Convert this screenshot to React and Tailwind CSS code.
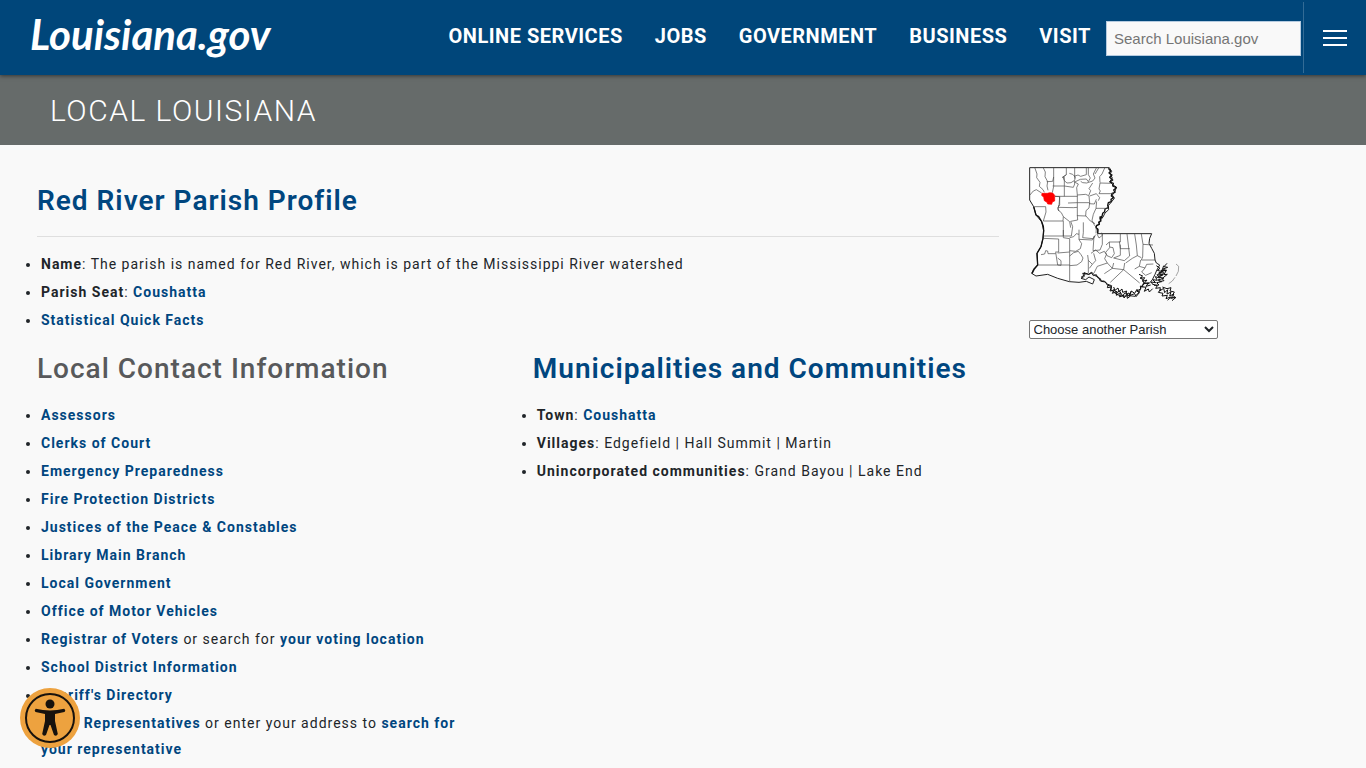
import { useState } from "react";

const navLinks = ["Online Services", "Jobs", "Government", "Business", "Visit"];

const contactsBefore = [
  "Assessors",
  "Clerks of Court",
  "Emergency Preparedness",
  "Fire Protection Districts",
  "Justices of the Peace & Constables",
  "Library Main Branch",
  "Local Government",
  "Office of Motor Vehicles",
];

const parishes = ["Acadia", "Bossier", "Caddo", "De Soto", "Natchitoches", "Sabine"];

const TextLink = ({ children }) => (
  <a href="#" className="font-bold text-[#00467f] hover:underline">
    {children}
  </a>
);

const List = ({ children }) => (
  <ul className="flex list-outside list-disc flex-col gap-[2px] pr-8 pl-1 text-sm leading-[26px] tracking-[1px]">
    {children}
  </ul>
);

const Header = () => (
  <header className="relative flex h-[75px] items-center bg-[#00467a] shadow-[0_1px_4px_rgba(0,0,0,0.5)]">
    <a
      href="#"
      className="ml-[30px] pb-2 font-['Lato','Liberation_Sans',sans-serif] text-[42px] leading-[50px] font-bold text-white italic"
    >
      Louisiana.gov
    </a>
    <nav className="ml-auto flex gap-8 pb-[3px]">
      {navLinks.map((link) => (
        <a
          key={link}
          href="#"
          className="text-xl leading-6 font-bold tracking-wide whitespace-nowrap text-white uppercase"
        >
          {link}
        </a>
      ))}
    </nav>
    <form className="ml-[15px]" onSubmit={(e) => e.preventDefault()}>
      <input
        type="search"
        aria-label="Search Louisiana.gov"
        placeholder="Search Louisiana.gov"
        className="mt-[2px] block h-[35px] w-[195px] border border-[#b5cbe0] bg-[#f9f9f9] px-[7px] font-['Liberation_Sans',sans-serif] text-[15px] text-gray-800 placeholder:text-[#757575]"
      />
    </form>
    <button
      type="button"
      aria-label="Menu"
      className="ml-[2px] flex h-[71px] w-[63px] flex-col items-center justify-center gap-[5px] border-l border-[#336b95]"
    >
      <span className="h-[2px] w-6 bg-white" />
      <span className="h-[2px] w-6 bg-white" />
      <span className="h-[2px] w-6 bg-white" />
    </button>
  </header>
);

const ParishMap = () => (
  <svg
    className="block h-[137px] w-[152px]"
    viewBox="0 0 456 411"
    role="img"
    aria-label="Map of Louisiana with Red River Parish in red"
    fill="none"
    stroke="#444"
    strokeWidth="2"
    strokeLinejoin="round"
  >
    {/* state outline */}
    <path
      fill="#fff"
      stroke="#222"
      strokeWidth="3"
      d="M2 2H241L248 13 243 21 250 33 242 44 252 54 262 60 258 74 250 84 256 94 248 104 238 116 239 128 228 138 222 150 214 160 210 172 201 178 206 190 206 200H368L362 214 360 229 368 244 376 259 378 279 382 288 392 294 384 308 378 322 370 338 360 350 344 348 336 362 330 376 318 388 300 386 280 388 262 382 246 368 248 356 236 352 226 342 214 342 208 330 198 326 190 317 180 322 161 319 166 328 156 334 170 338 180 330 196 338 191 351 172 343 150 346 121 344 86 334 56 322 21 327 8 319 14 306 26 294 24 259 36 239 42 214 44 191 38 164 21 144 14 119 2 99Z"
    />
    {/* river bank and west border */}
    <path
      stroke="#111"
      strokeWidth="4"
      d="M238 4l7 8-5 6 9 6-7 7 9 8-8 6 10 4-2 8 11 5-8 7 4 7-9 3-2 8 7 5-8 5 1 7-9 3-2 8 2 7-10 4-1 8-6 5-2 9-8 3M220 150l-7 5 3 7-7 3 2 7-8 3-2 7 6 5-1 12M14 119l7 25 8 5 9 15 5 14 1 13-2 23-6 25-12 20 2 35-10 12-7 14"
    />
    {/* northern parishes */}
    <path d="M17 1l7 20-1 11 10 14-2 12 11 10 4 8M42 1l7 14-1 14 8 15-2 13 3 13M74 1v29l-3 13-18 1M74 30v28l-4 19M112 1v22l-12 8M71 57h35V31h-6M106 57l27 4 4-10-1-10M112 23l-10 8 4 10 8 7 12-1 11-7 2-10-8-8-10-3M137 1v34M172 1v22l-17 5-8-4-12 4M1 86l12-14 9-4 16 10M137 45l17-8 18-1 6 8 6-11-6-10V1M210 1l-7 12-5 8M203 1l-10 20 5 12-7 9-18 6-12-1-6-4M228 1l-9 20-7 8 1 18M191 48l-11 17 5 6-6 15M213 48l36 1M213 48l-3 18 4 6-4 8h43M179 86l-9-4-25 2-2-22 5-11-10-5M145 84v23l-28 1M78 88h67M78 88l14 1-2 28M106 57v31M92 89v24l-6 10 4 9M88 121l45 1 12-1v-14M145 107h37l-2-20M182 107l-2 16-9 8-1 16M180 110l16 1 6-14M182 87l20-7 10 12-4 9M203 103l-2 21h36M201 124l-8 18-4 18 6 12 7 10-1 17M16 119h34M50 119l1 16-8 27M43 162h59l1-13 19 15 3 18M103 149l-6-12-10-8 2-14M125 163l21-4-1-13 26 1M145 147v-26M171 147l13 15 14 8M103 162v45M125 163l6 16-4 28H42M163 166v31M163 197l-2 15 31 3 8-12" />
    {/* southern parishes */}
    <path d="M42 214l47 2v39h-10M103 189v23l19 3v128M122 212l12-3 8-9 8 2M150 188v30l8 12-4 15-14 8-18-2M36 263l11-2 3-10 6 1 1 8h23M80 256l6 38 10 1v-14l-10-8M27 294h95M86 258l36-3M122 267l12-10 14-4 8 10 6 10-4 11-14 10-22 2M150 217l40 2 8-12M195 207l-3 44M204 201l6 12 10-8-2-8M220 198v34l-7 17-21 2M186 259l14-10 12 10 14-6 6 10-5 12 8 13M176 264l2 16 12 12 10-11-6-22M178 280v38M190 292l-9 12M235 288l-30 10-10 20M231 234l10-9h33M241 225l1 17-12 14 4 10 14 6 8-12-4-18-10-2M274 201v24M274 233v32l-20 8M271 223l3 22h28M294 201l8 66M317 201l5 33 3 32 12 6M302 267l-16 14-32-8M325 266l-15 8-20 14M337 201l5 31 30 2M342 232l-1 38-4 9h42M335 279l-4 19-14 8M331 298l17 5 5-11 20-1M348 303l-10 12 12 10 18-8M287 288l-3 20-40 38M284 308l48 40M254 288l-4 16-24 16M250 304l34 4M235 288l15 16" />
    {/* marsh and delta */}
    <path
      stroke="#111"
      strokeWidth="3"
      d="M156 331l12-8-3-6 14 5 8-6 6 10 9-3 4 9 8 3 3 8 12 2 6 9 11 4M238 352l-3 10 12-2-4 12 13-3-6 10 14-6-2 12 12-8-2 13 11-6 2 9 9-11 1 12 8-6-3-10-9 4 2-10-12 4-2-10-9 8-3-11-9 7-4-10M254 366l9 14 8-9 10 16 7-10 11 9 8-14 10 7 7-12 6 10M307 372l-4 13 14-5 4 9 10-12-8-5 12-6-1-9 9 3M330 322l11 5-8 7 14-2-6 11 13-4-9 11 14-3-8 11 14-4M336 330l10 20-8 9 13 2-5 12 12-7 3 9 10-10"
    />
    <path
      stroke="#111"
      strokeWidth="3"
      d="M414 289l-9 10 11 2-14 5 10 5-16-1 9 9-15-3 9 10-15-3 8 10-13-4 6 11-14-2 9 9-14-2 7 9M382 296l11 8-8 6 14 4-11 7 15 2-13 7 14 4-17 5 11 5-15 3 7 7-15 1M404 296l-6 18 14-5-7 14 10-1-16 13 6 6-14 3M372 352l13 4-5 8 14-2-2 10 12-8 3 13 9-9-2 13 12-6-4 12 13-6-10 13 16-3-12 10M396 366l-8 10 14 3-3 8 16-2-4 10 14-5-9 10M400 360l14 5 12-3-3 10 13 3-5 9 6 6-10 3"
    />
    <path stroke="#777" d="M441 291l8 7-1 15-7 14M438 331l-8 11-11 8" />
    {/* Red River Parish */}
    <path
      fill="#f00"
      stroke="#f00"
      d="M39 79h16l7-2 9 1 6 7v17l-7 3-2 7-12-1-2-5-8-5-2-10-6-6Z"
    />
  </svg>
);

const AccessibilityButton = () => (
  <button
    type="button"
    aria-label="Accessibility options"
    className="fixed bottom-5 left-5 h-[60px] w-[60px] rounded-full"
  >
    <svg viewBox="0 0 60 60" className="h-full w-full">
      <circle cx="30" cy="30" r="30" fill="#eda23f" />
      <circle cx="30" cy="30" r="24" fill="none" stroke="#17120d" strokeWidth="2" />
      <circle cx="30" cy="16" r="4.5" fill="#17120d" />
      <path
        fill="#17120d"
        d="M15.800 20.800Q30 24 44.200 20.800Q46.200 22.600 44.400 24L35 26V33L37.800 46Q36.500 49 34 47L30.500 37H29.500L26 47Q23.500 49 22.200 46L25 33V26L15.600 24Q13.800 22.600 15.800 20.800Z"
      />
    </svg>
  </button>
);

const App = () => {
  const [parish, setParish] = useState("");

  return (
    <div className="min-h-screen bg-[#f9f9f9] font-['Roboto',sans-serif] text-[#212529]">
      <Header />
      <div className="bg-[#666b6a] px-[50px] pt-[15px] pb-[13px]">
        <h1 className="text-3xl leading-[42px] font-light tracking-wider text-white uppercase">
          Local Louisiana
        </h1>
      </div>

      <main className="flex px-[22px]">
        <div className="w-3/4 px-[15px] pt-[39px]">
          <h2 className="text-[28px] leading-[34px] font-semibold tracking-[1px] text-[#00467f]">
            Red River Parish Profile
          </h2>
          <hr className="mt-[18px] mb-[14px] border-[#dfdfdf]" />
          <List>
            <li>
              <strong>Name</strong>: The parish is named for Red River, which is part of the
              Mississippi River watershed
            </li>
            <li>
              <strong>Parish Seat</strong>: <TextLink>Coushatta</TextLink>
            </li>
            <li>
              <TextLink>Statistical Quick Facts</TextLink>
            </li>
          </List>

          <div className="-mx-[15px] mt-[19px] flex">
            <section className="w-1/2 px-[15px]">
              <h2 className="mb-4 text-[28px] leading-[34px] font-medium tracking-[1px] text-[#58595b]">
                Local Contact Information
              </h2>
              <List>
                {contactsBefore.map((name) => (
                  <li key={name}>
                    <TextLink>{name}</TextLink>
                  </li>
                ))}
                <li>
                  <TextLink>Registrar of Voters</TextLink> or search for{" "}
                  <TextLink>your voting location</TextLink>
                </li>
                <li>
                  <TextLink>School District Information</TextLink>
                </li>
                <li>
                  <TextLink>Sheriff's Directory</TextLink>
                </li>
                <li>
                  <TextLink>State Representatives</TextLink> or enter your address to{" "}
                  <TextLink>search for your representative</TextLink>
                </li>
              </List>
            </section>
            <section className="w-1/2 px-[15px]">
              <h2 className="mb-4 text-[28px] leading-[34px] font-semibold tracking-[1px] whitespace-nowrap text-[#00467f]">
                Municipalities and Communities
              </h2>
              <List>
                <li>
                  <strong>Town</strong>: <TextLink>Coushatta</TextLink>
                </li>
                <li>
                  <strong>Villages</strong>: Edgefield | Hall Summit | Martin
                </li>
                <li>
                  <strong>Unincorporated communities</strong>: Grand Bayou | Lake End
                </li>
              </List>
            </section>
          </div>
        </div>

        <aside className="w-1/4 px-[15px] pt-[22px]">
          <ParishMap />
          <select
            aria-label="Choose another Parish"
            value={parish}
            onChange={(e) => setParish(e.target.value)}
            className="mt-4 block h-[19px] w-[189px] rounded-[2px] border border-[#767676] bg-white font-['Liberation_Sans',sans-serif] text-[13px] text-[#212529]"
          >
            <option value="">Choose another Parish</option>
            {parishes.map((name) => (
              <option key={name} value={name}>
                {name}
              </option>
            ))}
          </select>
        </aside>
      </main>
      <AccessibilityButton />
    </div>
  );
};

export default App;
